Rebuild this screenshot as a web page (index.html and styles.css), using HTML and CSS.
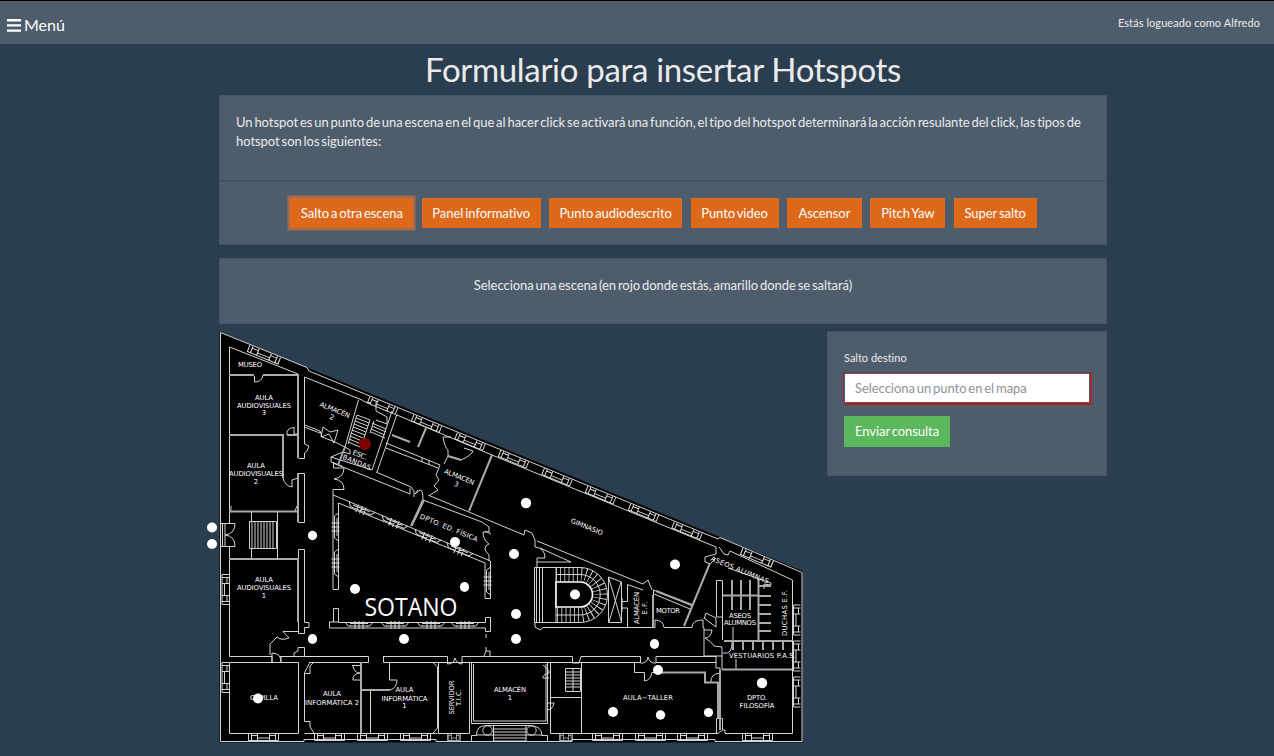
FILE: index.html
```html
<!DOCTYPE html>
<html lang="es">
<head>
<meta charset="utf-8">
<title>Formulario para insertar Hotspots</title>
<link rel="stylesheet" href="styles.css">
</head>
<body>
<header class="topbar">
  <a class="menu"><svg class="menu-icon" viewBox="0 0 14 13"><path d="M0 1.2h14M0 6.4h14M0 11.6h14"/></svg><span>Menú</span></a>
  <span class="user">Estás logueado como Alfredo</span>
</header>
<main class="container">
  <h1>Formulario para insertar Hotspots</h1>
  <section class="card types">
    <div class="intro">Un hotspot es un punto de una escena en el que al hacer click se activará una función, el tipo del hotspot determinará la acción resulante del click, las tipos de<br>hotspot son los siguientes:</div>
    <nav class="buttons">
      <button class="btn b1 active">Salto a otra escena</button>
      <button class="btn b2">Panel informativo</button>
      <button class="btn b3">Punto audiodescrito</button>
      <button class="btn b4">Punto video</button>
      <button class="btn b5">Ascensor</button>
      <button class="btn b6">Pitch Yaw</button>
      <button class="btn b7">Super salto</button>
    </nav>
  </section>
  <section class="card notice"><span>Selecciona una escena (en rojo donde estás, amarillo donde se saltará)</span></section>
  <div class="row">
    <svg class="map" viewBox="219 331 585 413">
      <defs>
        <g id="win"><path d="M0 0V7H30V0M3 0V7M9 0V7M21 0V7M27 0V7M3 2H9M21 2H27M9 4.500H21"/></g>
        <g id="pane"><path d="M-2 0L1 4H4M26 0L23 4H20M3 1.500H21M3 4H21M8 -1V7M12 -1V7M16 -1V7"/></g>
      </defs>
      <path class="floor" d="M219.500 331.500L802.500 571V742.500H219.500Z"/>
      <g class="line">
        <path d="M220.500 332.500L307 367.500L309 371L718 539L720 537.500L802 572.500V741.500H715V739.500H572V741.500H436V739.500H304V741.500H220.500V332.500"/>
        <!-- West wing -->
        <path d="M229.500 347L298 374M229.500 347V523M229.500 546V656.500H272M304.500 377V444L309 446L307 451L304.500 453V458.500H298.500M298.500 473.500H304.500V522.500H298.500ZM298.500 549.500H304.500V622.500H309V627.500H304.500V633.500H298.500ZM254.500 376V382Q262 382 263 375M287 435Q286 428 294 427.500V434H298M283 478Q285 486 292 487V480L298 478M231 506V510L229 512M297 506L295 511"/>
        <path d="M249.500 521.500H276.500V548.500H249.500ZM252 522V548M255 522V548M258 522V548M261 522V548M264 522V548M267 522V548M270 522V548M273 522V548M251.500 512V521M277.500 512V559M251.500 549V559M220 523.500H235Q235 534 225 535Q235 536 235 546.500H220M222.500 524V546M225 524V546"/>
        <path d="M298 631.500H283L289 638Q281 641 277 637L270 644V655M272 662V653Q281 653 281 662M281 656.500H294V653L298 651V647.500H304.500V656.500H368.500V662.500H309.500L310 662L304.500 673V721.500H310V727L314 733M229.500 662.500H298.500V733.500H229.500ZM272 662V656M281 662V656"/>
        <path d="M304.500 673.500H310V666L314 662M304.500 733.500H437.500M352 665.500H360M353 666Q354 673 360 673Q352 674 353 680H360M370.500 690V733M389.500 662V680H397Q397 688 390 690"/>
        <!-- North-west storage and stairs -->
        <path d="M304.500 377L362 400L365 402L371 403M358.500 400L345 447L350 450V454L343 452L331 457V462L342 466M304.500 425L320 431L322 437L335 442L345 447M304 427L320 433M323 427L321 437L329 434L334 443L338 430L330 432ZM392 411L372 470M397 414L377 472M376 402V411L387 417V424L376 420M331 457L372 470M333 463L410 494M376 472L411 487L414 491V497M410 488V494M418 490L415 494L420 490Q423 490 423 500"/>
        <path d="M357 415L370 420M356 418L369 423M355 421L368 426M354 424L367 429M353 427L366 432M352 430L365 435M351 433L363 438M350 436L362 441M349 439L361 444M348 442L360 447M372 423L386 429M372 426L386 432M371 429L385 435M371 432L385 438M357 415L348 444M370 420L361 447M374 421L370 433"/>
        <path d="M397 415L492 455L716 547V554L705 557V562L710 564M386 443L440 465M386 448L438 468M422 458V462M429 460V465M440 465L436 475L439 480L434 486L438 490L430 495M443 437Q445 448 448 450V456L461 460Q472 455 473 451L464 448M443 437H451M448 456L444 464"/>
        <path d="M428 495L524 535L525 530L532 533L535 540M423 500L482 522L489 527V532H483Q483 540 489 544Q481 547 489 555V561M424 501L412 526M537 541L643 584L648 580L652 590M653 590L692 605M535 540V547Q545 548 545 558H537V562H571L540 548M485 531L491 534"/>
        <!-- Patio -->
        <path d="M333.500 462V468H344Q344 477 334 479Q344 480 344 489.500H333V589.500H338.500V503L485 563V598.500H490.500V561L338 497L333 495M333.500 622H329.500V628H485.500V631.500H490.500V617.500H485.500V622.500H338.500V608.500H333.500V622H338M486 634V638M486 647V651L484 656M490 656V651H486"/>
        <path d="M280 656.500H368M383.500 656.500H447.500V664Q454 664 455 658Q457 664 462 664V656.500H572.500V663H579L581 656.500H640.500V663Q647 664 648 657Q650 664 656 663V656.500H716M383.500 656V662.500H447M462 662.500H572M580 662.500H640M656 662.500H716V656"/>
        <path d="M389.500 662.500H433L437.500 667V728L433 733M438.500 662.500H469.500V733.500H438.500ZM471.500 662.500H547.500V723.500H471.500ZM473.500 664V721H546V664M550.500 662.500H581.500V733.500H550.500ZM550 697.500H581M543 665Q550 671 549 673Q542 675 543 678H549M547 703H554Q553 709 548 710"/>
        <path d="M565.500 668.500H580.500V691.500H565.500ZM565 672H580M565 675H580M565 678H580M565 681H580M565 684H580M565 687H580M573 668V691M471.500 741V735.500H476.500Q476 725.500 487 725.500H530Q542 726 542 735.500H547.500V741M493.500 725V741H526V725M493 729H526M493 732H526M493 735H526M493 738H526M476 735H493M526 735H542"/>
        <circle cx="487.500" cy="730.500" r="4.700"/><circle cx="531.500" cy="730.500" r="4.700"/>
        <!-- Spiral stairs and lift -->
        <path d="M580 567.500H534.500V622.500H580M536.500 567V622M539.500 567V622M542.500 567V622M537 567V562M535 622V627L540 630L543 627.500H655V620Q663 620 664 627.500H692Q692 620 703 620V627.500H704M556 567V622M556 574.500H580A20 20 0 0 1 580 615H556M580 567.500A27 27 0 0 1 580 622.500"/>
        <path class="steps" d="M556 574.500H580A20 20 0 0 1 580 615H556"/>
        <path class="bold" d="M556 582H580A12.500 12.500 0 0 1 580 607H556Z"/>
        <path d="M608.500 577L621.500 582V622.500H608.500ZM608.500 577L621.500 622M621 582L609 622M627.500 627V608H622M622 601.500H627.500V584.500L643 590M622 598V612M653.500 590V627M657 591L693 606M654 594L690 609"/>
        <!-- East wing -->
        <path d="M716.500 580.500H722.500V617H716.500ZM719 547L724 554L728 555L730 551L792.500 580V733.500M722.500 617V640M704 640V628M704 618L716 627V618L706 613L704 619M704 630H712Q711 638 705 638Q711 641 714 646L722 647V656H704V640M733 641V627M723 653Q733 655 732 641M736 669V659M728 568L771 583V585L764 584V589M710 564L716 558"/>
        <path d="M581.500 733.500H718L722.500 730H725V733.500H792.500M716.500 733V718.500H722.500V730M581.500 662.500H634.500V672.500H644.500V681Q651 680 652 672.500H705V682.500H711Q710 674 720 673V668H716V662M722 656V669.500H792"/>
      </g>
      <g class="wall">
        <path d="M229 375H254M263 375H298V458M229 435H283V478M229 511.500H298M229 559H298V622M287 435H298M298 473V522M361 662V733M361 690H390M345 447L338 465M392 435L410 442M426 428L418 447M492 455L469 511M423 500L411 526M448 456L461 460M710 563L684 626M653 595V627M656 591L692 605"/>
        <path d="M723 595.500H758M732 580V610M741 580V610M750 580V610M758.500 579V641M724 641H792M733 641V650M743 641V650M753 641V650M763 641V650M773 641V650M783 641V650M758 586H771M758 596H771M758 605H771M758 614H771M758 623H771M758 631H771M722 669.500H792M655 672.500H705V682.500H718V718M720 670V730"/>
      </g>
      <g class="line">
        <use href="#win" transform="translate(250 345) rotate(22.300) scale(1.100 1)"/>
        <use href="#win" transform="translate(370 396.500) rotate(22.300)"/>
        <use href="#win" transform="translate(414 414.500) rotate(22.300)"/>
        <use href="#win" transform="translate(457.500 432.500) rotate(22.300)"/>
        <use href="#win" transform="translate(501 450) rotate(22.300)"/>
        <use href="#win" transform="translate(544.500 468) rotate(22.300)"/>
        <use href="#win" transform="translate(588 486) rotate(22.300)"/>
        <use href="#win" transform="translate(631 503.500) rotate(22.300)"/>
        <use href="#win" transform="translate(674.500 521.500) rotate(22.300)"/>
        <use href="#win" transform="translate(743 548) rotate(22.300) scale(1.100 1)"/>
        <use href="#win" transform="translate(229 574.500) rotate(90)"/>
        <use href="#win" transform="translate(229 662.500) rotate(90)"/>
        <use href="#win" transform="translate(800.500 605) rotate(90)"/>
        <use href="#win" transform="translate(800.500 641) rotate(90)"/>
        <use href="#win" transform="translate(800.500 677) rotate(90)"/>
        <use href="#win" transform="translate(248.500 733.500)"/>
        <use href="#win" transform="translate(314.500 733.500)"/>
        <use href="#win" transform="translate(357.500 733.500)"/>
        <use href="#win" transform="translate(400.500 733.500)"/>
        <use href="#win" transform="translate(447.500 733.500) scale(.43 1)"/>
        <use href="#win" transform="translate(559.500 733.500) scale(.43 1)"/>
        <use href="#win" transform="translate(592.500 733.500)"/>
        <use href="#win" transform="translate(635.500 733.500)"/>
        <use href="#win" transform="translate(677.500 733.500)"/>
        <use href="#win" transform="translate(742.500 733.500)"/>
        <use href="#pane" transform="translate(351 502.500) rotate(22.300)"/>
        <use href="#pane" transform="translate(384 516) rotate(22.300)"/>
        <use href="#pane" transform="translate(417 530) rotate(22.300)"/>
        <use href="#pane" transform="translate(449 543.500) rotate(22.300)"/>
        <use href="#pane" transform="translate(347 622)"/>
        <use href="#pane" transform="translate(383 622)"/>
        <use href="#pane" transform="translate(419 622)"/>
        <use href="#pane" transform="translate(453 622)"/>
        <use href="#pane" transform="translate(338.500 515) rotate(90)"/>
        <use href="#pane" transform="translate(338.500 551) rotate(90)"/>
        <use href="#pane" transform="translate(490.500 569) rotate(90)"/>
      </g>
      <g class="rooms">
        <text x="250" y="367" textLength="24">MUSEO</text>
        <text x="264" y="400" textLength="18">AULA</text><text x="264" y="407.500" textLength="54">AUDIOVISUALES</text><text x="264" y="415">3</text>
        <text x="256" y="468" textLength="18">AULA</text><text x="256" y="475.500" textLength="54">AUDIOVISUALES</text><text x="256" y="483.500">2</text>
        <text x="264" y="582" textLength="18">AULA</text><text x="264" y="589.500" textLength="54">AUDIOVISUALES</text><text x="264" y="597.500">1</text>
        <g transform="translate(334 412) rotate(22.300)"><text textLength="32">ALMACÉN</text><text y="8">2</text></g>
        <g transform="translate(359 457) rotate(22.300)"><text textLength="15">ESC.</text><text y="8" textLength="30">BANDAS</text></g>
        <g transform="translate(458.500 479) rotate(22.300)"><text textLength="32">ALMACEN</text><text y="8">3</text></g>
        <text transform="translate(448 530) rotate(22.300)" textLength="62">DPTO. ED. FÍSICA</text>
        <text transform="translate(586 529) rotate(22.300)" textLength="34">GIMNASIO</text>
        <text transform="translate(739 572) rotate(22.300)" textLength="62">ASEOS ALUMNAS</text>
        <text x="264" y="700" textLength="28">CAPILLA</text>
        <text x="332" y="696" textLength="18">AULA</text><text x="332" y="704.500" textLength="54">INFORMÁTICA 2</text>
        <text x="404.500" y="692" textLength="18">AULA</text><text x="404.500" y="700.500" textLength="46">INFORMÁTICA</text><text x="404.500" y="708">1</text>
        <g transform="translate(453.500 697.500) rotate(-90)"><text textLength="34">SERVIDOR</text><text y="7.500" textLength="17">T.I.C.</text></g>
        <text x="510" y="692" textLength="32">ALMACÉN</text><text x="510" y="700">1</text>
        <g transform="translate(639 608) rotate(-90)"><text textLength="32">ALMACÉN</text><text y="8" textLength="13">E.F.</text></g>
        <text x="668" y="612.500" textLength="24">MOTOR</text>
        <text x="740" y="617.500" textLength="22">ASEOS</text><text x="740" y="625" textLength="32">ALUMNOS</text>
        <text transform="translate(787 613) rotate(-90)" textLength="46">DUCHAS E.F.</text>
        <text x="762.500" y="658" textLength="67">VESTUARIOS P.A.S.</text>
        <text x="648" y="700" textLength="50">AULA−TALLER</text>
        <text x="757" y="700" textLength="20">DPTO.</text><text x="757" y="708" textLength="35">FILOSOFÍA</text>
      </g>
      <text class="floor-name" x="364.500" y="616" textLength="93" lengthAdjust="spacingAndGlyphs">SOTANO</text>
      <g class="points">
        <circle cx="212" cy="527.500" r="5"/><circle cx="212" cy="544" r="5"/>
        <ellipse cx="312.500" cy="535.500" rx="4.600" ry="4.700"/><circle cx="355" cy="589" r="5"/>
        <ellipse cx="464.500" cy="587" rx="4.600" ry="5"/><circle cx="455" cy="542" r="5"/>
        <circle cx="514" cy="554" r="5"/><circle cx="516" cy="614" r="5"/><circle cx="516" cy="639" r="5"/>
        <circle cx="404" cy="639" r="5"/><ellipse cx="312.500" cy="639" rx="4.600" ry="5"/>
        <circle cx="526" cy="503" r="5.200"/><circle cx="675" cy="564.500" r="5"/><circle cx="575" cy="594.500" r="5"/>
        <ellipse cx="654.500" cy="644" rx="4.600" ry="5"/><circle cx="658" cy="670" r="5"/><circle cx="613" cy="712" r="5"/>
        <circle cx="660.500" cy="715" r="4.700"/><circle cx="708.500" cy="712.500" r="4.600"/>
        <circle cx="762" cy="683" r="5.200"/><circle cx="258" cy="698.500" r="5"/>
        <circle class="current" cx="365" cy="444" r="6.100"/>
      </g>
    </svg>
    <form class="card form">
      <label for="dest">Salto destino</label>
      <input id="dest" type="text" placeholder="Selecciona un punto en el mapa">
      <button class="send" type="button">Enviar consulta</button>
    </form>
  </div>
</main>
</body>
</html>
```
FILE: styles.css
```css
* { box-sizing: border-box; }
body { margin: 0; height: 756px; overflow: hidden; background: #2b3e50; color: #ebebeb; font: 13px/19px Lato, sans-serif; font-variant-ligatures: none; }
.topbar { height: 44px; border-top: 1px solid #000; background: #4e5d6c; display: flex; justify-content: space-between; padding: 0 14px 0 7px; }
.menu { display: flex; align-items: flex-start; gap: 3px; padding-top: 14px; color: #fff; font-size: 16px; line-height: 20px; }
.menu-icon { width: 14px; height: 13px; margin-top: 4px; fill: none; stroke: #fff; stroke-width: 2.4; }
.user { font-size: 11px; line-height: 16px; padding-top: 14px; letter-spacing: .07px; }
.container { width: 888px; margin-left: 219px; }
h1 { margin: 0; height: 51px; padding-top: 5px; text-align: center; font-size: 33px; font-weight: 400; line-height: 40px; letter-spacing: -.32px; white-space: nowrap; }
.card { background: #4e5d6c; border: 1px solid #455565; }
.types { height: 150px; }
.intro, .notice, .btn, .send, input { font-variant-ligatures: none; word-spacing: -1.38px; letter-spacing: -.05px; }
.intro { height: 86px; padding: 17px 16px 0; border-bottom: 2px solid #435363; white-space: nowrap; }
.buttons { display: flex; justify-content: center; gap: 8.4px; padding: 16px 0 0 1px; }
.btn, .send { border: 0; border-radius: 0; padding: 0; font: 13px/18px Lato, sans-serif; color: #fff; white-space: nowrap; }
.btn { height: 30px; background: #df691a; }
.active { box-shadow: 0 0 0 2.500px #a06c50; }
.b1 { width: 123px; } .b2 { width: 119px; } .b3 { width: 133px; } .b4 { width: 88px; }
.b5 { width: 75px; } .b6 { width: 75px; } .b7 { width: 83px; }
.notice { height: 66px; margin-top: 13px; padding-top: 17px; text-align: center; }
.row { display: flex; justify-content: space-between; align-items: flex-start; margin-top: 7px; }
.map { width: 585px; height: 413px; overflow: visible; flex: none; }
.floor { fill: #000; }
.line { fill: none; stroke: #ddd; stroke-width: .95; }
.wall { fill: none; stroke: #aaa; stroke-width: 2; }
.line .bold { stroke: #fff; stroke-width: 1.600; fill: #000; }
.line .steps { stroke-width: 14; stroke-dasharray: .8 3.400; }
.rooms { fill: #fff; font: 6.8px "DejaVu Sans", sans-serif; text-anchor: middle; }
.floor-name { fill: #fff; font: 25px "Open Sans", sans-serif; }
.points { fill: #fff; }
.current { fill: #800000; }
.form { width: 280px; height: 145px; padding: 17px 15px 0 16px; display: flex; flex-direction: column; align-items: flex-start; }
label { font-size: 11px; line-height: 18px; }
input { width: 246px; height: 30px; margin-top: 6px; padding: 0 10px; border: 1px solid #4e5d6c; border-radius: 0; background: #fff; box-shadow: .5px 0 1px 1.500px #c7131c; font: 13px Lato, sans-serif; outline: 0; }
input::placeholder { color: #8a949c; opacity: 1; }
.send { width: 106px; height: 31px; margin-top: 13px; padding-bottom: 1px; background: #5cb85c; }
```
